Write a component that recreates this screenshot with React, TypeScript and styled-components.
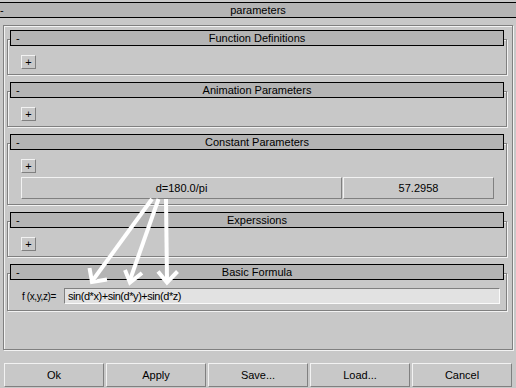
import React from 'react';
import styled, { createGlobalStyle } from 'styled-components';

const GlobalStyle = createGlobalStyle`
    html, body {
        margin: 0;
        padding: 0;
        background: #c8c8c8;
    }
    body {
        font-family: "Liberation Sans", Arial, sans-serif;
        font-size: 11px;
        color: #000;
    }
`;

const LIGHT = '#f2f2f2';
const DARK = '#808080';

const Window = styled.div`
    position: relative;
    width: 516px;
    height: 388px;
    overflow: hidden;
    background: #c8c8c8;
    display: flex;
    flex-direction: column;
`;

const TitleBar = styled.div`
    margin: 2px 0 0;
    height: 14px;
    border-top: 1px solid #000;
    border-bottom: 1px solid #000;
    background: #b4b4b4;
    display: grid;
    grid-template-columns: 1fr auto 1fr;
    align-items: center;
    line-height: 14px;
`;

const Dash = styled.span<{ $indent: number }>`
    padding-left: ${(p) => p.$indent}px;
`;

const Panel = styled.div`
    margin: 7px 3px 0 3px;
    height: 325px;
    box-sizing: border-box;
    border: 1px solid ${DARK};
    box-shadow: inset 1px 1px 0 ${LIGHT}, 1px 1px 0 ${LIGHT};
    padding: 13px 5px 0 3px;
`;

const Frame = styled.div`
    border: 1px solid ${DARK};
    box-shadow: inset 1px 1px 0 ${LIGHT}, 1px 1px 0 ${LIGHT};
    padding: 0 2px 5px;
    & + & {
        margin-top: 16px;
    }
`;

const Header = styled.div`
    margin-top: -10px;
    height: 14px;
    border: 1px solid #000;
    background: #b4b4b4;
    display: grid;
    grid-template-columns: 1fr auto 1fr;
    align-items: center;
    line-height: 14px;
`;

const Body = styled.div<{ $padRight?: number }>`
    padding: 9px ${(p) => p.$padRight ?? 10}px 0 11px;
    display: flex;
    flex-direction: column;
    align-items: flex-start;
`;

const raised = `
    box-sizing: border-box;
    background: #c8c8c8;
    border: 1px solid;
    border-color: ${LIGHT} ${DARK} ${DARK} ${LIGHT};
`;

const PlusButton = styled.div`
    ${raised}
    width: 15px;
    height: 14px;
    display: flex;
    align-items: center;
    justify-content: center;
    font-size: 11px;
    line-height: 12px;
`;

const ValueRow = styled.div`
    align-self: stretch;
    margin-top: 4px;
    display: grid;
    grid-template-columns: 321px 1fr;
    gap: 1px;
`;

const ValueBox = styled.div`
    ${raised}
    height: 22px;
    display: flex;
    align-items: center;
    justify-content: center;
`;

const FormulaRow = styled.div`
    align-self: stretch;
    margin: -1px 0 1px;
    display: grid;
    grid-template-columns: 43px 1fr;
    align-items: center;
`;

const FormulaLabel = styled.span`
    padding-left: 1px;
    font-size: 10px;
    letter-spacing: -0.4px;
    white-space: nowrap;
`;

const FormulaInput = styled.input`
    box-sizing: border-box;
    height: 16px;
    margin: 0;
    padding: 0 3px;
    border: 1px solid;
    border-color: ${DARK} #fafafa #fafafa ${DARK};
    background: #e2e2e2;
    font-family: "Liberation Sans", Arial, sans-serif;
    font-size: 11px;
    letter-spacing: -0.45px;
    color: #000;
    outline: none;
`;

const ButtonRow = styled.div`
    margin: 13px 4px 0;
    display: flex;
    gap: 2px;
`;

const DialogButton = styled.div`
    ${raised}
    flex: 1;
    height: 24px;
    display: flex;
    align-items: center;
    justify-content: center;
`;

const Overlay = styled.svg`
    position: absolute;
    left: 0;
    top: 0;
    pointer-events: none;
`;

type RolloutProps = {
    title: string;
    children: React.ReactNode;
    padRight?: number;
};

const Rollout = ({ title, children, padRight }: RolloutProps) => (
    <Frame>
        <Header>
            <Dash $indent={5}>-</Dash>
            <span>{title}</span>
            <span />
        </Header>
        <Body $padRight={padRight}>{children}</Body>
    </Frame>
);

const arrows = [
    { shaft: 'M152 199 L93 280', head: 'M89.5 268 L92 282 L107 279.5' },
    { shaft: 'M158.5 199 L130 280', head: 'M125 270 L130 282.5 L142 273' },
    { shaft: 'M166 199 L167 280', head: 'M158 271.5 L167 282.5 L177.5 271.5' },
];

const buttons = ['Ok', 'Apply', 'Save...', 'Load...', 'Cancel'];

export default function App() {
    return (
        <>
            <GlobalStyle />
            <Window>
                <TitleBar>
                    <Dash $indent={0}>-</Dash>
                    <span>parameters</span>
                    <span />
                </TitleBar>
                <Panel>
                    <Rollout title="Function Definitions">
                        <PlusButton>+</PlusButton>
                    </Rollout>
                    <Rollout title="Animation Parameters">
                        <PlusButton>+</PlusButton>
                    </Rollout>
                    <Rollout title="Constant Parameters">
                        <PlusButton>+</PlusButton>
                        <ValueRow>
                            <ValueBox>d=180.0/pi</ValueBox>
                            <ValueBox>57.2958</ValueBox>
                        </ValueRow>
                    </Rollout>
                    <Rollout title="Experssions">
                        <PlusButton>+</PlusButton>
                    </Rollout>
                    <Rollout title="Basic Formula" padRight={4}>
                        <FormulaRow>
                            <FormulaLabel>f (x,y,z)=</FormulaLabel>
                            <FormulaInput readOnly value="sin(d*x)+sin(d*y)+sin(d*z)" />
                        </FormulaRow>
                    </Rollout>
                </Panel>
                <ButtonRow>
                    {buttons.map((label) => (
                        <DialogButton key={label}>{label}</DialogButton>
                    ))}
                </ButtonRow>
                <Overlay width={516} height={388} viewBox="0 0 516 388">
                    {arrows.map((a, idx) => (
                        <g key={`arrow${idx}`} fill="none" stroke="#fff" strokeWidth={4} strokeLinejoin="miter">
                            <path d={a.shaft} />
                            <path d={a.head} />
                        </g>
                    ))}
                </Overlay>
            </Window>
        </>
    );
}
